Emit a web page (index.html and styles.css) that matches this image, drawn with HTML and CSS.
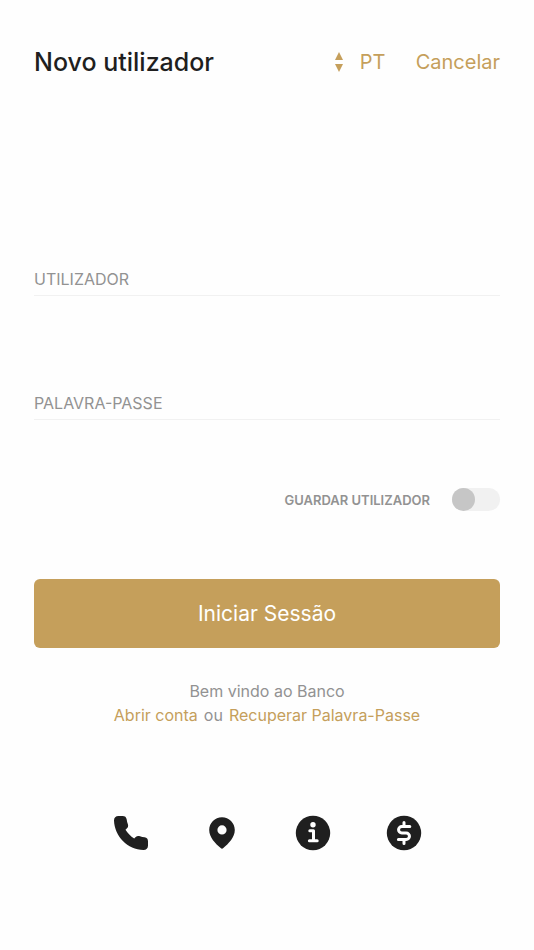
FILE: index.html
```html
<!DOCTYPE html>
<html lang="pt">
<head>
    <meta charset="UTF-8">
    <meta name="viewport" content="width=device-width, initial-scale=1.0">
    <title>Novo utilizador</title>
    <link rel="stylesheet" href="styles.css">
</head>
<body>

    <header class="topo">
        <h1>Novo utilizador</h1>
        <div class="idioma">
            <svg class="setas" viewBox="0 0 8 20" aria-hidden="true">
                <path d="M4 0 8 8h-8z M4 20 8 12h-8z"/>
            </svg>
            <select aria-label="Idioma">
                <option>PT</option>
                <option>EN</option>
            </select>
        </div>
        <a href="#" class="cancelar">Cancelar</a>
    </header>

    <main>
        <form class="login-form">
            <input type="text" class="campo" name="utilizador" aria-label="Utilizador" placeholder="UTILIZADOR">
            <input type="password" class="campo" name="palavra-passe" aria-label="Palavra-passe" placeholder="PALAVRA-PASSE">

            <div class="guardar">
                <label for="guardar">GUARDAR UTILIZADOR</label>
                <input type="checkbox" id="guardar" class="interruptor">
            </div>

            <button type="submit" class="btn-principal">Iniciar Sessão</button>
        </form>

        <div class="boas-vindas">
            <p>Bem vindo ao Banco</p>
            <p class="ligacoes"><a href="#">Abrir conta</a><span>ou</span><a href="#">Recuperar Palavra-Passe</a></p>
        </div>
    </main>

    <nav class="atalhos">
        <a href="#" aria-label="Telefone">
            <svg viewBox="0 0 36 36">
                <path d="M5.500 1H9.500C12 1 13.300 2.200 13.700 4.400C13.900 6 14.300 7.500 14.900 9.300C15.400 11 15.100 12.200 14 13.300L12.500 14.800C14.800 18.400 17.500 21.200 21.200 23.500L22.700 22C23.900 20.900 25.200 20.700 27 21.200C28.500 21.700 30 22 31.600 22.300C33.900 22.700 35 24 35 26.400V30.600C35 33.600 33.300 35 30.500 35C14.500 34.500 1.500 21.500 1 5.500C1 2.700 2.700 1 5.500 1Z"/>
            </svg>
        </a>
        <a href="#" aria-label="Agências">
            <svg viewBox="0 0 36 36">
                <path fill-rule="evenodd" d="M18 2.200C10.900 2.200 5.200 7.900 5.200 15C5.200 22.500 11.500 28.500 16.700 33.100C17.500 33.800 18.500 33.800 19.300 33.100C24.500 28.500 30.800 22.500 30.800 15C30.800 7.900 25.100 2.200 18 2.200ZM18 10.300A4.600 4.600 0 1 1 18 19.500A4.600 4.600 0 1 1 18 10.300Z"/>
            </svg>
        </a>
        <a href="#" aria-label="Informações">
            <svg viewBox="0 0 36 36">
                <circle cx="18" cy="18" r="17.200"/>
                <circle class="claro" cx="18" cy="9.800" r="2.700"/>
                <path class="traco" d="M14.800 15.700H18.500V25.600M14.400 25.800H22.200"/>
            </svg>
        </a>
        <a href="#" aria-label="Câmbios">
            <svg viewBox="0 0 36 36">
                <circle cx="18" cy="18" r="17.200"/>
                <path class="traco" d="M18 7.500V11.500M18 24.500V28.500M23.800 11.500H15.800A3.250 3.250 0 0 0 15.800 18H20.200A3.250 3.250 0 0 1 20.200 24.500H12.400"/>
            </svg>
        </a>
    </nav>

</body>
</html>
```

FILE: styles.css
```css
* {
    box-sizing: border-box;
}
body {
    font-family: Inter, 'Helvetica Neue', Arial, sans-serif;
    margin: 0;
    padding: 40px 34px;
    background-color: #fefefe;
    color: #1f1f1f;
}
a {
    color: #c59f5b;
    text-decoration: none;
}
.topo {
    display: flex;
    align-items: center;
    height: 44px;
}
h1 {
    margin: 0;
    font-size: 25px;
    font-weight: 500;
}
.idioma {
    display: flex;
    align-items: center;
    gap: 17px;
    margin-left: auto;
}
.setas {
    width: 8px;
    height: 20px;
    fill: #c59f5b;
}
.idioma select {
    appearance: none;
    padding: 0;
    border: none;
    background: none;
    color: #c59f5b;
    font-family: inherit;
    font-size: 20px;
    cursor: pointer;
}
.cancelar {
    margin-left: 28px;
    font-size: 20px;
}
.login-form {
    display: flex;
    flex-direction: column;
    margin-top: 179px;
}
.campo {
    width: 100%;
    height: 33px;
    margin-bottom: 91px;
    padding: 0;
    border: none;
    border-bottom: 1px solid #f1f1f1;
    background: none;
    color: #1f1f1f;
    font-family: inherit;
    font-size: 16px;
}
.campo::placeholder {
    color: #929292;
    opacity: 1;
}
.campo:focus {
    outline: none;
    border-bottom-color: #c59f5b;
}
.guardar {
    display: flex;
    align-items: center;
    justify-content: flex-end;
    gap: 22px;
    margin-top: -23px;
    color: #929292;
    font-size: 13px;
    font-weight: 600;
}
.interruptor {
    appearance: none;
    width: 48px;
    height: 23px;
    margin: 0;
    border-radius: 12px;
    background-color: #f1f1f1;
    cursor: pointer;
}
.interruptor::before {
    content: '';
    display: block;
    width: 23px;
    height: 23px;
    border-radius: 50%;
    background-color: #c6c6c6;
}
.interruptor:checked::before {
    margin-left: auto;
    background-color: #c59f5b;
}
.btn-principal {
    height: 69px;
    margin-top: 68px;
    border: none;
    border-radius: 6px;
    background-color: #c59f5b;
    color: #fff;
    font-family: inherit;
    font-size: 21px;
    cursor: pointer;
}
.boas-vindas {
    margin-top: 31px;
    color: #929292;
    font-size: 16px;
    line-height: 24px;
    text-align: center;
}
.boas-vindas p {
    margin: 0;
}
.ligacoes {
    display: flex;
    justify-content: center;
    gap: 6px;
}
.atalhos {
    display: flex;
    justify-content: center;
    gap: 55px;
    margin-top: 88px;
}
.atalhos svg {
    display: block;
    width: 36px;
    height: 36px;
    fill: #1f1f1f;
}
.atalhos .claro {
    fill: #fff;
}
.atalhos .traco {
    fill: none;
    stroke: #fff;
    stroke-width: 3;
    stroke-linecap: round;
    stroke-linejoin: round;
}
```
